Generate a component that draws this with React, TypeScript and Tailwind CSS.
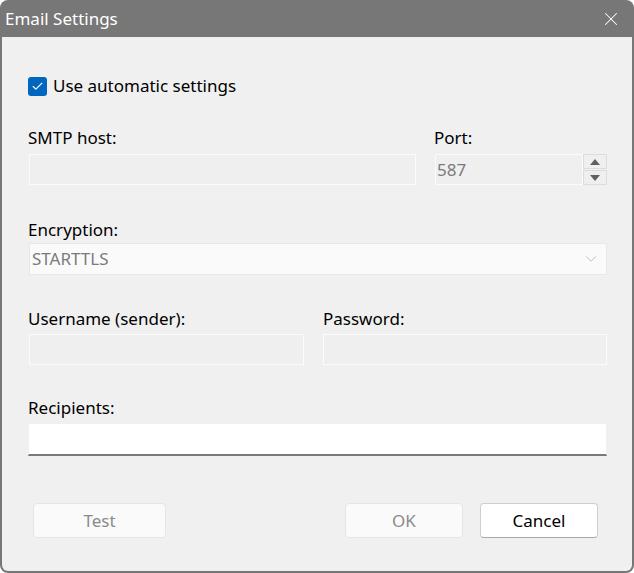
import { ChevronDown, X, Check } from "lucide-react";

const font = { fontFamily: '"Segoe UI", "Noto Sans", sans-serif' };

function Label({ children }: { children: React.ReactNode }) {
  return <div className="text-[17px] leading-[22px] text-black">{children}</div>;
}

function DisabledInput({ className = "" }: { className?: string }) {
  return <div className={`h-[31px] border border-[#fbfbfb] bg-[#efefef] ${className}`} />;
}

export default function App() {
  return (
    <div className="w-[634px] h-[573px] bg-white" style={font}>
      <div className="w-full h-full rounded-lg bg-[#777777] flex flex-col px-[2px] pb-[2px] overflow-hidden">
        <div className="h-[37px] flex items-center justify-between shrink-0">
          <span className="pl-[3px] text-[17px] text-white">Email Settings</span>
          <X className="w-[22px] h-[22px] mr-[10px] text-white" strokeWidth={1.1} />
        </div>
        <div className="flex-1 bg-[#f0f0f0] rounded-b-md pl-[26px] pr-[25px] flex flex-col">
          <div className="mt-[38px] flex items-center gap-[6px]">
            <div className="w-[19px] h-[19px] rounded-[3px] bg-[#0067c0] flex items-center justify-center">
              <Check className="w-[13px] h-[13px] text-white" strokeWidth={2} />
            </div>
            <span className="text-[17px] leading-[22px] text-black">Use automatic settings</span>
          </div>

          <div className="mt-[30px] flex gap-[18px]">
            <div className="flex flex-col w-[388px]">
              <Label>SMTP host:</Label>
              <DisabledInput className="mt-[5px] ml-[1px]" />
            </div>
            <div className="flex flex-col flex-1">
              <Label>Port:</Label>
              <div className="mt-[5px] ml-[1px] flex">
                <div className="flex-1 h-[31px] border border-[#fbfbfb] bg-[#efefef] flex items-center pl-[1px] text-[17px] text-[#7a7a7a]">
                  587
                </div>
                <div className="w-[24px] flex flex-col gap-[1px]">
                  <div className="h-[15px] border border-[#dcdcdc] bg-[#efefef] flex items-center justify-center">
                    <svg width="10" height="6" viewBox="0 0 10 6"><path d="M0 6 L5 0 L10 6 Z" fill="#606060" /></svg>
                  </div>
                  <div className="h-[15px] border border-[#dcdcdc] bg-[#efefef] flex items-center justify-center">
                    <svg width="10" height="6" viewBox="0 0 10 6"><path d="M0 0 L5 6 L10 0 Z" fill="#606060" /></svg>
                  </div>
                </div>
              </div>
            </div>
          </div>

          <div className="mt-[34px] flex flex-col">
            <Label>Encryption:</Label>
            <div className="mt-[2px] ml-[1px] h-[32px] border border-[#e8e8e8] bg-[#fafafa] flex items-center justify-between pl-[2px] pr-[6px]">
              <span className="text-[17px] text-[#7a7a7a]">STARTTLS</span>
              <ChevronDown className="w-[18px] h-[18px] text-[#b0b0b0]" strokeWidth={1.1} />
            </div>
          </div>

          <div className="mt-[33px] flex gap-[19px]">
            <div className="flex flex-col w-[276px]">
              <Label>Username (sender):</Label>
              <DisabledInput className="mt-[4px] ml-[1px]" />
            </div>
            <div className="flex flex-col flex-1">
              <Label>Password:</Label>
              <DisabledInput className="mt-[4px]" />
            </div>
          </div>

          <div className="mt-[32px] flex flex-col">
            <Label>Recipients:</Label>
            <div className="mt-[4px] h-[33px] bg-white border border-[#f0f0f0] border-b-[2px] border-b-[#7a7a7a]" />
          </div>

          <div className="mt-[47px] flex items-center">
            <button className="ml-[5px] w-[133px] h-[35px] rounded-[4px] border border-[#e5e5e5] bg-[#fafafa] text-[17px] text-[#8a8a8a]">
              Test
            </button>
            <div className="flex-1" />
            <button className="w-[118px] h-[35px] rounded-[4px] border border-[#e5e5e5] bg-[#fafafa] text-[17px] text-[#8a8a8a]">
              OK
            </button>
            <button className="ml-[17px] mr-[9px] w-[118px] h-[35px] rounded-[4px] border border-[#cfcfcf] border-b-[#a8a8a8] bg-white text-[17px] text-black">
              Cancel
            </button>
          </div>
        </div>
      </div>
    </div>
  );
}
